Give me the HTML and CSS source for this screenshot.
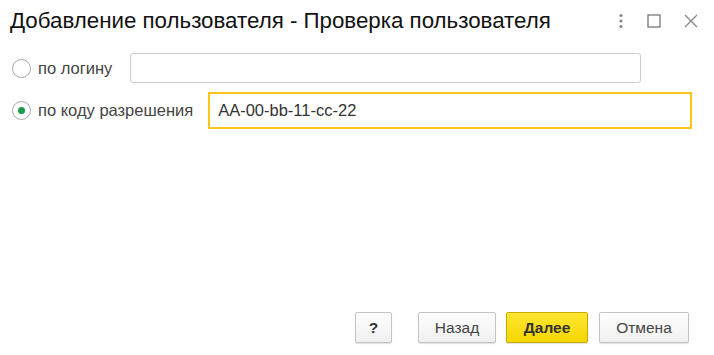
FILE: index.html
```html
<!doctype html>
<html lang="ru">
<head>
	<meta charset="UTF-8">
	<title>Добавление пользователя</title>
	<link rel="stylesheet" href="styles.css">
</head>
<body>
	<div id="wrap">
		<div class="head">
			<h1>Добавление пользователя - Проверка пользователя</h1>
			<div class="tools">
				<svg width="6" height="16" viewBox="0 0 6 16"><circle cx="3" cy="2.5" r="1.6" fill="#888"/><circle cx="3" cy="8" r="1.6" fill="#888"/><circle cx="3" cy="13.5" r="1.6" fill="#888"/></svg>
				<svg width="14" height="14" viewBox="0 0 14 14"><rect x="1" y="1" width="12" height="12" fill="none" stroke="#777" stroke-width="1.3"/></svg>
				<svg width="14" height="14" viewBox="0 0 14 14"><path d="M1 1L13 13M13 1L1 13" stroke="#888" stroke-width="1.3"/></svg>
			</div>
		</div>
		<div class="form">
			<div class="row row1">
				<span class="radio"></span>
				<span class="label">по логину</span>
				<input type="text" class="inp" />
			</div>
			<div class="row row2">
				<span class="radio on"></span>
				<span class="label">по коду разрешения</span>
				<input type="text" class="inp active" value="AA-00-bb-11-cc-22" />
			</div>
		</div>
		<div class="foot">
			<button class="btn help">?</button>
			<button class="btn back">Назад</button>
			<button class="btn next">Далее</button>
			<button class="btn cancel">Отмена</button>
		</div>
	</div>
</body>
</html>
```

FILE: styles.css
```css
*{
	padding:0;
	margin:0;
	box-sizing:border-box;
}
body{
	font-family:"Liberation Sans", Arial, sans-serif;
	background:#fff;
}
#wrap{
	width:714px;
	height:355px;
	display:flex;
	flex-direction:column;
}
.head{
	height:42px;
	display:flex;
	align-items:center;
	padding:0 16px 0 10px;
}
.head h1{
	flex:1;
	font-size:22.3px;
	font-weight:normal;
	color:#111;
}
.tools{
	display:flex;
	align-items:center;
	gap:23px;
}
.form{
	flex:1;
	padding-top:11px;
}
.row{
	display:flex;
	align-items:center;
	padding-left:12px;
}
.row1{
	height:30px;
}
.row2{
	height:37px;
	margin-top:9px;
}
.radio{
	width:19px;
	height:19px;
	border:1px solid #aaa;
	border-radius:50%;
	display:flex;
	align-items:center;
	justify-content:center;
}
.radio.on::after{
	content:"";
	width:7px;
	height:7px;
	border-radius:50%;
	background:#1a9a4b;
}
.label{
	font-size:16.5px;
	color:#444;
	margin-left:7px;
}
.inp{
	font-family:inherit;
	font-size:16.5px;
	color:#333;
	outline:none;
}
.row1 .inp{
	margin-left:18px;
	width:511px;
	height:30px;
	border:1px solid #ccc;
	border-radius:3px;
}
.row2 .inp{
	margin-left:15px;
	width:484px;
	height:37px;
	border:2px solid #fac719;
	padding-left:8px;
}
.foot{
	display:flex;
	justify-content:flex-end;
	padding:0 25px 12px 0;
	gap:10px;
}
.btn{
	height:31px;
	font-family:inherit;
	font-size:15.5px;
	color:#444;
	background:linear-gradient(#fff,#f0f0f0);
	border:1px solid #c4c4c4;
	border-radius:2px;
	box-shadow:0 1px 1px rgba(0,0,0,0.12);
}
.help{
	width:37px;
	margin-right:16px;
	font-weight:bold;
	color:#333;
}
.back{
	width:78px;
}
.next{
	width:82px;
	font-weight:bold;
	color:#333;
	background:linear-gradient(#ffe733,#f5d500);
	border-color:#c9a800;
}
.cancel{
	width:90px;
	margin-left:1px;
}
```
